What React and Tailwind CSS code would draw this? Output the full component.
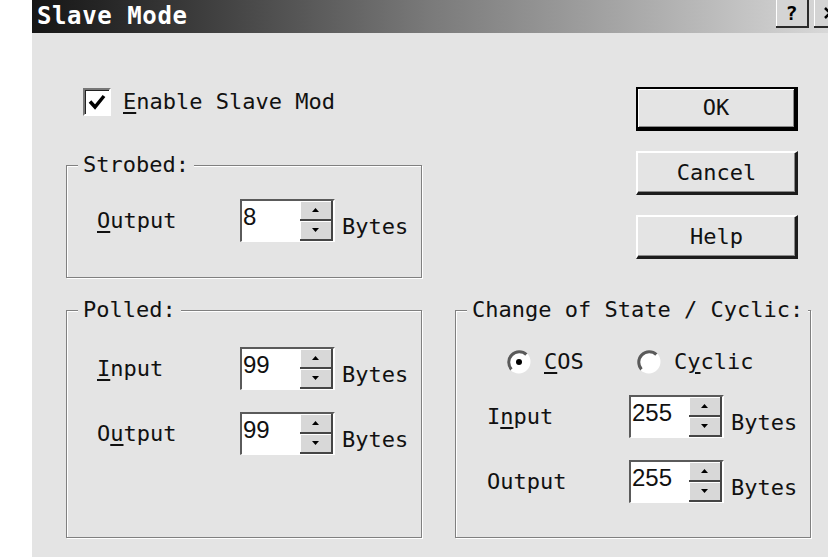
import React from 'react';

function TitleBtn({ children }) {
  return (
    <div className="flex h-[28px] w-[33px] shrink-0 items-center justify-center border-r-2 border-b-2 border-r-[#2a2a2a] border-b-[#2a2a2a] bg-[#d4d4d4] shadow-[inset_1px_0_0_#fff] text-[20px] font-bold leading-[20px] text-black">
      {children}
    </div>
  );
}

function Arrow({ up }) {
  return (
    <svg width="7" height="4" viewBox="0 0 7 4">
      <polygon points={up ? '3.5,0 7,4 0,4' : '0,0 7,0 3.5,4'} fill="#000" />
    </svg>
  );
}

function SpinBtn({ up }) {
  return (
    <div className="flex flex-1 items-center justify-center border-r-2 border-b-2 border-r-[#454545] border-b-[#454545] bg-[#d8d8d8] shadow-[inset_1px_1px_0_#fff]">
      <Arrow up={up} />
    </div>
  );
}

function Spin({ value }) {
  return (
    <div className="flex h-[43px] w-[95px] shrink-0 border-t-2 border-l-2 border-r-2 border-b border-t-[#5a5a5a] border-l-[#5a5a5a] border-r-white border-b-white bg-white">
      <div className="flex-1 pl-[1px] pt-[4px] font-['Liberation_Sans',sans-serif] text-[24px] leading-[24px]">{value}</div>
      <div className="flex w-[33px] flex-col">
        <SpinBtn up />
        <SpinBtn />
      </div>
    </div>
  );
}

function SpinRow({ label, value, rowClass, labelClass }) {
  return (
    <div className={`flex h-[43px] ${rowClass}`}>
      <span className={`self-center text-[22px] leading-[22px] ${labelClass}`}>{label}</span>
      <Spin value={value} />
      <span className="mb-[4px] ml-[7px] self-end text-[22px] leading-[22px]">Bytes</span>
    </div>
  );
}

function Group({ title, className, children }) {
  return (
    <div className={`flex flex-col border border-[#808080] shadow-[inset_1px_1px_0_#fff,1px_1px_0_#fff] ${className}`}>
      <div className="-mt-[12px] ml-[11px] w-fit bg-[#e4e4e4] px-[5px] text-[22px] leading-[22px]">{title}</div>
      {children}
    </div>
  );
}

function Radio({ checked }) {
  return (
    <svg width="24" height="24" viewBox="0 0 24 24">
      <circle cx="12" cy="12" r="10.5" fill="#fff" />
      <path d="M4.58 19.42 A10.5 10.5 0 0 1 19.42 4.58" stroke="#5a5a5a" strokeWidth="3" fill="none" />
      <path d="M19.42 4.58 A10.5 10.5 0 0 1 4.58 19.42" stroke="#fff" strokeWidth="2.5" fill="none" />
      {checked && <circle cx="12" cy="12" r="3" fill="#000" />}
    </svg>
  );
}

const U = ({ children }) => <span className="underline decoration-2 underline-offset-[3px]">{children}</span>;

export default function App() {
  return (
    <div className="flex h-[557px] w-[828px] overflow-hidden bg-white font-['DejaVu_Sans_Mono',monospace] text-[#111]">
      <div className="w-[32px] shrink-0" />
      <div className="flex flex-1 flex-col bg-[#e4e4e4]">
        {/* Title bar */}
        <div className="flex h-[33px] shrink-0 bg-linear-to-r from-[#161616] via-[#7a7a7a] to-[#d8d8d8]">
          <div className="flex-1 pl-[5px] pt-[3px] text-[24px] font-bold leading-[26px] tracking-[0.6px] text-white">Slave Mode</div>
          <div className="flex w-[52px] shrink-0 gap-[5px] overflow-hidden">
            <TitleBtn>?</TitleBtn>
            <div className="flex h-[28px] w-[33px] shrink-0 items-center justify-center border-r-2 border-b-2 border-r-[#2a2a2a] border-b-[#2a2a2a] bg-[#d4d4d4] shadow-[inset_1px_0_0_#fff]">
              <svg width="12" height="12" viewBox="0 0 12 12">
                <path d="M1 1 L11 11 M11 1 L1 11" stroke="#000" strokeWidth="2.5" />
              </svg>
            </div>
          </div>
        </div>

        {/* Body */}
        <div className="flex flex-1 flex-col pl-[34px] pt-[54px]">
          <div className="flex">
            <div className="flex w-[356px] flex-col">
              <div className="mt-[1px] flex h-[28px] items-center pl-[17px]">
                <div className="flex h-[28px] w-[28px] items-center justify-center border-2 border-t-[#777] border-l-[#777] border-r-white border-b-white bg-white shadow-[inset_1px_1px_0_#222]">
                  <svg width="20" height="20" viewBox="0 0 20 20">
                    <path d="M3 9.5 L8 15 L17 4" stroke="#000" strokeWidth="3.5" fill="none" />
                  </svg>
                </div>
                <span className="ml-[12px] text-[22px] leading-[22px]"><U>E</U>nable Slave Mod</span>
              </div>
              <Group title="Strobed:" className="mt-[49px] h-[113px]">
                <SpinRow label={<><U>O</U>utput</>} value="8" rowClass="mt-[23px] pl-[30px]" labelClass="w-[143px]" />
              </Group>
            </div>
            <div className="ml-[214px] flex w-[162px] flex-col gap-[20px] text-[22px] leading-[22px]">
              <div className="flex h-[44px] items-center justify-center border-t-2 border-l-2 border-r-[4px] border-b-[4px] border-black shadow-[inset_1px_1px_0_#fff,inset_-1px_-1px_0_#8a8a8a]">OK</div>
              <div className="flex h-[44px] items-center justify-center border-t-2 border-l-2 border-r-[3px] border-b-[3px] border-t-white border-l-white border-r-[#1c1c1c] border-b-[#1c1c1c] shadow-[inset_-1px_-1px_0_#8a8a8a]">Cancel</div>
              <div className="flex h-[44px] items-center justify-center border-t-2 border-l-2 border-r-[3px] border-b-[3px] border-t-white border-l-white border-r-[#1c1c1c] border-b-[#1c1c1c] shadow-[inset_-1px_-1px_0_#8a8a8a]">Help</div>
            </div>
          </div>

          <div className="mt-[32px] flex gap-[33px]">
            <Group title="Polled:" className="h-[228px] w-[356px]">
              <SpinRow label={<><U>I</U>nput</>} value="99" rowClass="mt-[26px] pl-[30px]" labelClass="w-[143px]" />
              <SpinRow label={<>O<U>u</U>tput</>} value="99" rowClass="mt-[22px] pl-[30px]" labelClass="w-[143px]" />
            </Group>
            <Group title="Change of State / Cyclic:" className="h-[228px] w-[356px]">
              <div className="mt-[29px] flex h-[24px] items-center pl-[51px] text-[22px] leading-[22px]">
                <div className="flex w-[130px] items-center">
                  <Radio checked />
                  <span className="ml-[13px]"><U>C</U>OS</span>
                </div>
                <Radio />
                <span className="ml-[13px]">C<U>y</U>clic</span>
              </div>
              <SpinRow label={<>I<U>n</U>put</>} value="255" rowClass="mt-[21px] pl-[31px]" labelClass="w-[142px]" />
              <SpinRow label="Output" value="255" rowClass="mt-[22px] pl-[31px]" labelClass="w-[142px]" />
            </Group>
          </div>
        </div>
      </div>
    </div>
  );
}
